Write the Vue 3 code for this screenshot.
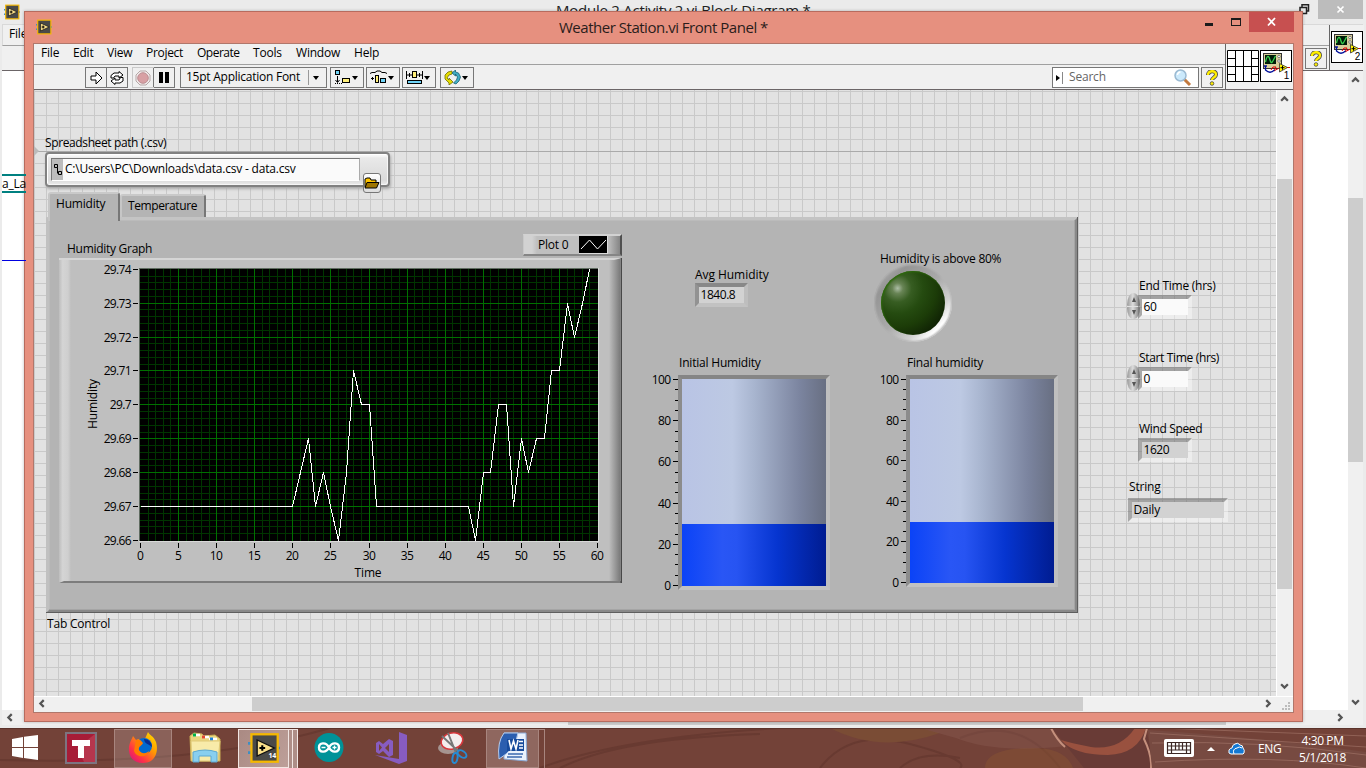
<script setup>
const readings = [
  [0, 67], [20, 67], [21, 68], [22, 69], [23, 67], [24, 68], [25, 67], [26, 66], [27, 68],
  [28, 71], [29, 70], [30, 70], [31, 67], [43, 67], [44, 66], [45, 68], [46, 68], [47, 70],
  [48, 70], [49, 67], [50, 69], [51, 68], [52, 69], [53, 69], [54, 71], [55, 71], [56, 73],
  [57, 72], [58, 73], [59, 74]
]
const gx = t => Math.floor(81.5 + t * 7.617) + 0.5
const gy = v => Math.floor(11.3 + (74 - v) * 33.9) + 0.5
const trace = readings.map(([t, v]) => `${gx(t)},${gy(v)}`).join(' ')
const minorX = Array.from({ length: 60 }, (_, i) => i + 1).filter(i => i % 5)
const majorX = Array.from({ length: 13 }, (_, i) => i * 5)
const minorY = Array.from({ length: 40 }, (_, i) => i).filter(i => i % 5).map(i => 66 + i / 5)
const majorY = [66, 67, 68, 69, 70, 71, 72, 73, 74]
const yLabel = v => (v === 70 ? '29.7' : `29.${v}`)
const menus = ['File', 'Edit', 'View', 'Project', 'Operate', 'Tools', 'Window', 'Help']
const tanks = [
  { key: 'initial', title: 'Initial Humidity', h: 206 },
  { key: 'final', title: 'Final humidity', h: 203 }
]
const steps = Array.from({ length: 21 }, (_, i) => i * 5)
const ty = (h, s) => Math.round(5 + h - (h * s) / 100) + 0.5
</script>

<template>
  <div class="desktop">
    <svg width="0" height="0" class="defs">
      <symbol id="vi" viewBox="0 0 28 28">
        <path d="M0 10h5M0 18h5M24 14h4" stroke="#3d8ec4" stroke-width="2.4" />
        <rect x="3" y="2" width="23" height="24" fill="#4a4a48" stroke="#f5b800" stroke-width="2" />
        <path d="M8 7l15 7-15 7z" fill="#fbe08a" stroke="#111" stroke-width="1.2" />
        <path d="M10 14h5M12.500 11.500v5" stroke="#000" stroke-width="1.800" />
      </symbol>
      <symbol id="scope" viewBox="0 0 32 32">
        <rect x=".5" y=".5" width="31" height="31" fill="#fff" stroke="#000" />
        <rect x="3.500" y="3.500" width="18" height="15" fill="#d8cf9a" stroke="#333" />
        <rect x="5" y="5" width="11" height="9" fill="#001c08" />
        <path d="M5.500 12c1.500-7 3-7 4.500-2s2.500 2 5.500-4" fill="none" stroke="#35d04c" stroke-width="1.300" />
        <circle cx="19" cy="6.500" r="1.300" fill="#fff" stroke="#555" stroke-width=".7" />
        <circle cx="19" cy="11" r="1.300" fill="#fff" stroke="#555" stroke-width=".7" />
        <path d="M11 20l2-3h3l-2 4 6-3.500h10" fill="none" stroke="#e00000" />
        <path d="M4 16h3M5.500 16v4c3 3 6 3 9 0" fill="none" stroke="#00109a" stroke-width="1.300" />
        <path d="M19.500 13.500l8 4-8 4.500z" fill="#fff200" stroke="#333" stroke-width=".8" />
        <path d="M20.500 17.700h4M22.500 15.700v4" stroke="#000" />
      </symbol>
      <symbol id="help" viewBox="0 0 12 16">
        <path d="M2 5c0-5 8-5 8-.5 0 3-4 3-4 5.500" fill="none" stroke="#444" stroke-width="4" />
        <path d="M2 5c0-5 8-5 8-.5 0 3-4 3-4 5.500" fill="none" stroke="#ffee00" stroke-width="2.400" />
        <circle cx="6" cy="13.500" r="1.800" fill="#ffee00" stroke="#444" stroke-width=".8" />
      </symbol>
      <symbol id="chev" viewBox="0 0 8 8">
        <path d="M1 6l3-3 3 3" fill="none" stroke="#555" stroke-width="2" />
      </symbol>
    </svg>

    <section class="back">
      <header class="back-title">
        <svg class="back-vi"><use href="#vi" /></svg>
        <span class="back-name">Module 2 Activity 2.vi Block Diagram *</span>
        <svg class="restore" width="12" height="12"><path d="M1 3.500h6.500v6H1zM3 3V.8h6.500V7H8" fill="none" stroke="#222" stroke-width="1.500" /></svg>
        <div class="back-close"><svg width="10" height="10"><path d="M1.500 1.500l6 6m0-6l-6 6" stroke="#fff" stroke-width="1.700" /></svg></div>
      </header>
      <div class="back-menu">File</div>
      <div class="back-tools"></div>
      <div class="back-icons">
        <div class="help-btn"><svg width="12" height="16"><use href="#help" /></svg></div>
        <div class="pane"><svg width="32" height="32"><use href="#scope" /></svg><b>2</b></div>
      </div>
      <div class="node">a_La</div>
      <div class="wire"></div>
      <div class="back-v"><svg class="up"><use href="#chev" /></svg><i></i><svg class="down"><use href="#chev" /></svg></div>
      <div class="back-h"><svg class="left"><use href="#chev" /></svg><i></i><svg class="right"><use href="#chev" /></svg></div>
    </section>

    <section class="window">
      <header class="titlebar">
        <svg class="win-vi"><use href="#vi" /></svg>
        <span class="caption">Weather Station.vi Front Panel *</span>
        <div class="controls">
          <i class="min"></i><i class="max"></i>
          <div class="close"><svg width="10" height="10"><path d="M1 1l7 7.500M8 1L1 8.500" stroke="#fff" stroke-width="1.800" /></svg></div>
        </div>
      </header>
      <div class="client">
        <div class="bars">
          <div class="bar-left">
            <nav class="menu"><span v-for="m in menus" :key="m" :class="'m-' + m.toLowerCase()">{{ m }}</span></nav>
            <div class="toolbar">
              <div class="btns run">
                <div><svg width="13" height="14"><path d="M1 5h5V1l6 6-6 6V9H1z" fill="#fff" stroke="#000" /></svg></div>
                <div><svg width="16" height="14"><path d="M2 7V4.500l3-2.500h5V.5L14 4l-4 3V5H6L4.500 7zM14 6.500V10l-3 2H6v1.500L2 10l4-3v2h4l1.500-2.500z" fill="#fff" stroke="#000" /></svg></div>
              </div>
              <div class="btns stop">
                <div class="off"><svg width="16" height="16"><path d="M5 1h6l4 4v6l-4 4H5l-4-4V5z" fill="#f3eeee" stroke="#b5a6a6" /><circle cx="8" cy="8" r="5.300" fill="#d8a0a4" stroke="#bc8e92" /></svg></div>
                <div><svg width="10" height="11"><path d="M0 0h4v11H0zM6 0h4v11H6z" /></svg></div>
              </div>
              <div class="font"><span>15pt Application Font</span><u></u><i class="tri"></i></div>
              <div class="drop a"><svg width="18" height="15"><rect x="1.500" y=".5" width="4" height="4" fill="#6fd3f7" stroke="#000" /><path d="M3.500 6v6M1.500 10l2 2.500 2-2.500" stroke="#000" fill="none" /><path d="M1 13.500h7" stroke="#000" stroke-dasharray="1 1" /><rect x="8.500" y="8.500" width="7" height="4" fill="#ffef7a" stroke="#000" /></svg><i class="tri"></i></div>
              <div class="drop b"><svg width="18" height="15"><path d="M0 3.500l2-1h3l2-1.500h3l2 1.500h3l2 1" stroke="#000" fill="none" /><path d="M1 8.500h3M2.500 7v3" stroke="#000" /><rect x="5.500" y="5.500" width="3" height="7" fill="#ffef7a" stroke="#000" /><rect x="10.500" y="8.500" width="5" height="4" fill="#6fd3f7" stroke="#000" /></svg><i class="tri"></i></div>
              <div class="drop c"><svg width="18" height="15"><path d="M.5 1v8M16.500 1v8M1 5h5M11 5h5M3.500 3v4M13.500 3v4" stroke="#000" /><rect x="6.500" y="1.500" width="4" height="6" fill="#ffef7a" stroke="#000" /><rect x="1.500" y="10.500" width="14" height="3" fill="#6fd3f7" stroke="#000" /></svg><i class="tri"></i></div>
              <div class="drop d"><svg width="18" height="15"><path d="M8 1L4 2 1 5v4l4 4v2l4-3-4-4v2L3 8l2-3 3-1z" fill="#e4dc00" stroke="#706c00" stroke-width=".8" /><path d="M12 14l3-3 1.500-4-2-4-3-1V0L8 3l3.500 3V4l2 3-1 3-3 3z" fill="#42adc3" stroke="#176073" stroke-width=".8" /></svg><i class="tri"></i></div>
              <div class="search"><i></i><u></u><span>Search</span><svg width="19" height="18"><path d="M11 10l6 6" stroke="#c37a3f" stroke-width="3" /><circle cx="7.500" cy="6.500" r="5.500" fill="#cbe9fb" stroke="#9bbad2" stroke-width="1.500" /><path d="M4.500 6a3 3 0 013-3" stroke="#fff" stroke-width="1.500" fill="none" /></svg></div>
              <div class="help-btn"><svg width="12" height="16"><use href="#help" /></svg></div>
            </div>
          </div>
          <div class="panes">
            <svg width="32" height="32"><path fill="#fff" stroke="#000" d="M.5.5h31v31H.5zM8.500 0v32M16.500 0v32M24.500 0v32M0 16.500h32M0 8.500h8M24 8.500h8M0 24.500h8M24 24.500h8" /></svg>
            <div class="pane"><svg width="32" height="32"><use href="#scope" /></svg><b>1</b></div>
          </div>
        </div>

        <div class="body">
          <main class="panel">
            <div class="origin"></div>
            <label class="lbl l-path">Spreadsheet path (.csv)</label>
            <div class="path">
              <div class="path-in"><em><svg width="9" height="13"><path d="M1.500 1.500h3v3h-3zM4.500 4.500v6M5.500 8.500h3v3h-3z" fill="none" stroke="#000" /></svg></em><span>C:\Users\PC\Downloads\data.csv - data.csv</span></div>
            </div>
            <div class="browse"><svg width="16" height="12"><path d="M1 10V2l2-1h3l1 2h5v3" fill="#ffc400" stroke="#000" /><path d="M1 11l2-5.500h12L12.500 11z" fill="#9d7400" stroke="#000" /></svg></div>

            <div class="tab t1">Humidity</div>
            <div class="tab t2">Temperature</div>
            <div class="page">
              <label class="lbl l-graph">Humidity Graph</label>
              <div class="legend"><span>Plot 0</span><svg width="29" height="18"><path d="M0 0h29v18H0z" /><path d="M2 13l8.500-9 8 9L27 4" fill="none" stroke="#fff" /></svg></div>
              <svg class="graph" width="563" height="325">
                <defs>
                  <linearGradient id="edgeL"><stop offset="0" stop-color="#bdbdbd" /><stop offset=".3" stop-color="#d4d4d4" /><stop offset=".75" stop-color="#cfcfcf" /><stop offset="1" stop-color="#bfbfbf" /></linearGradient>
                  <linearGradient id="edgeR"><stop offset="0" stop-color="#bfbfbf" /><stop offset="1" stop-color="#7b7b7b" /></linearGradient>
                </defs>
                <rect width="563" height="325" fill="#bfbfbf" />
                <rect width="12" height="325" fill="url(#edgeL)" />
                <rect x="550" width="11" height="325" fill="url(#edgeR)" />
                <path d="M0 0h563l-8 2H0z" fill="#d5d5d5" />
                <path d="M0 325h563v-2H5z" fill="#7c7c7c" />
                <rect x="561.500" width="1.500" height="325" fill="#484848" />
                <rect x="80" y="10" width="460" height="274" fill="#d9d9d9" />
                <rect x="80" y="10" width="459" height="273" fill="#5f6b60" />
                <rect x="81" y="11" width="458" height="272" />
                <g stroke="#003500" shape-rendering="crispEdges">
                  <path v-for="t in minorX" :key="'a' + t" :d="`M${gx(t)} 11V283`" />
                  <path v-for="v in minorY" :key="'b' + v" :d="`M81 ${gy(v)}H539`" />
                </g>
                <g stroke="#007000" shape-rendering="crispEdges">
                  <path v-for="t in majorX.slice(1, 12)" :key="'c' + t" :d="`M${gx(t)} 11V283`" />
                  <path v-for="v in majorY.slice(1, 8)" :key="'d' + v" :d="`M81 ${gy(v)}H539`" />
                </g>
                <polyline :points="trace" fill="none" stroke="#fff" shape-rendering="crispEdges" />
                <g stroke="#000" shape-rendering="crispEdges">
                  <path v-for="t in majorX" :key="'e' + t" :d="`M${gx(t)} 285v5`" />
                  <path v-for="v in majorY" :key="'f' + v" :d="`M74 ${gy(v)}h5`" />
                </g>
                <text v-for="t in majorX" :key="'g' + t" :x="gx(t) - 0.5" y="301.500" text-anchor="middle">{{ t }}</text>
                <text v-for="v in majorY" :key="'h' + v" x="72" :y="gy(v) + 4.500" text-anchor="end">{{ yLabel(v) }}</text>
                <text class="name" x="309" y="319" text-anchor="middle">Time</text>
                <text class="name" transform="translate(38 146) rotate(-90)" text-anchor="middle">Humidity</text>
              </svg>

              <label class="lbl l-avg">Avg Humidity</label>
              <div class="num avg">1840.8</div>
              <label class="lbl l-led">Humidity is above 80%</label>
              <div class="led"><i></i></div>

              <div v-for="k in tanks" :key="k.key" class="tank" :class="k.key">
                <label>{{ k.title }}</label>
                <div class="tank-row">
                  <svg width="30" :height="k.h + 16">
                    <template v-for="s in steps" :key="s">
                      <path :d="`M${s % 20 ? 25 : 23} ${ty(k.h, s)}H28`" stroke="#000" shape-rendering="crispEdges" />
                      <text v-if="s % 20 === 0" x="20.500" :y="ty(k.h, s) + 4.500" text-anchor="end">{{ s }}</text>
                    </template>
                  </svg>
                  <div class="glass"><div class="fluid"></div></div>
                </div>
              </div>
            </div>
            <label class="lbl l-tab">Tab Control</label>

            <label class="lbl l-end">End Time (hrs)</label>
            <div class="spin s-end"><b></b><b></b></div>
            <div class="num n-end white">60</div>
            <label class="lbl l-start">Start Time (hrs)</label>
            <div class="spin s-start"><b></b><b></b></div>
            <div class="num n-start white">0</div>
            <label class="lbl l-wind">Wind Speed</label>
            <div class="num n-wind">1620</div>
            <label class="lbl l-str">String</label>
            <div class="num n-str">Daily</div>
          </main>
          <div class="vbar"><svg><use href="#chev" /></svg><i></i><svg class="down"><use href="#chev" /></svg></div>
        </div>
        <div class="hbar"><svg class="left"><use href="#chev" /></svg><i></i><svg class="right"><use href="#chev" /></svg>
          <svg class="grip" width="9" height="9"><path d="M6 0h2v2H6zM3 3h2v2H3zM6 3h2v2H6zM0 6h2v2H0zM3 6h2v2H3zM6 6h2v2H6z" fill="#bcbcbc" /></svg>
        </div>
      </div>
    </section>

    <footer class="taskbar">
      <svg class="wall" width="1366" height="40">
        <rect width="1366" height="40" fill="#734238" />
        <g fill="none" stroke="#5d3129" stroke-opacity=".5"><path d="M0 32Q200 38 330 0M540 40Q620 10 780 0M820 40q30-40 90-24t50 24M960 10q60-24 100 30M560 40q60-30 200-34M900 40q20-18 60-10" stroke-width="2" /></g>
        <path d="M830 0q50 26 110 5l-20-5z" fill="#7a4c35" /><path d="M985 40q0-18 40-20t48 20z" fill="#845034" opacity=".6" />
        <path d="M920 0h130l16 18q-70 8-110-8z" fill="#88594f" opacity=".45" />
        <path d="M1052 0h94q2 12 6 24l-2 16h-66z" fill="#693b36" />
        <path d="M1146 0q-8 26-38 27-34 0-47-15 9 3 30 7 28 4 44-19z" fill="#99513f" />
        <path d="M1051 0q6 12 14 19M1147 0l-3 11q8 16 7 29" fill="none" stroke="#c5907d" stroke-width="2" />
        <path d="M1148 2q100 6 218 22v16h-214z" fill="#774a41" />
        <path d="M1150 5l216 14M1152 15q110-3 214 12M1155 34q120-8 211 6M1160 0l206 8" fill="none" stroke="#aa7c70" stroke-opacity=".55" />
        <rect width="1366" height="1" fill="#5b332b" />
      </svg>
      <div class="apps">
        <div class="app start"><svg width="26" height="25"><path d="M0 4l11-2v10H0zM12 1.800L26 0v12H12zM0 13h11v10L0 21zM12 13h14v12l-14-2z" fill="#fff" /></svg></div>
        <div class="app tt"><svg width="32" height="32"><rect x="1" y="1" width="30" height="30" fill="#a71c37" stroke="#7d7480" stroke-width="2" /><path d="M30 2v28H19L12 16z" fill="#c0485b" opacity=".6" /><path d="M7 8h18v6h-6v12h-6V14H7z" fill="#fff" /></svg></div>
        <div class="app fox"><svg width="31" height="32"><defs><linearGradient id="fx" x1="1" y1="0" x2=".1" y2="1"><stop offset="0" stop-color="#ffe900" /><stop offset=".4" stop-color="#ff9b00" /><stop offset=".75" stop-color="#ff3148" /><stop offset="1" stop-color="#d4147f" /></linearGradient></defs><path d="M20 0c2 4 5 3 8 10 3 10-1 21-13 21C5 31 0 24 1 15 2 9 4 7 5 4l3 4c4-2 5-1 8 1z" fill="url(#fx)" /><circle cx="16" cy="14" r="8" fill="#0069d0" /><path d="M8 8c4-1 5 0 7 3-1 3-5 3-4 7 3 5 8 3 10 1-1 6-12 8-15 0z" fill="#ff7a00" /><path d="M16 7c5 0 8 4 8 8-4-4-7-2-8-8" fill="#092d91" /></svg></div>
        <div class="app files"><svg width="34" height="31"><path d="M2 4l4-3 8 1 2 2 11-1 5 4v22H3z" fill="#ead67e" stroke="#c9ae54" /><path d="M5 3h7M14 5h7M21 7h8" stroke="#fff" stroke-width="2.500" /><path d="M5 3h3" stroke="#00b24b" stroke-width="3" /><path d="M14 5h3" stroke="#e24a31" stroke-width="3" /><path d="M22 7h3" stroke="#1d82d8" stroke-width="3" /><path d="M3 9h29l-2 20H4z" fill="#f8eba9" stroke="#e0c977" /><path d="M5 30V20q12-4 24 0v10h-6v-6H11v6z" fill="#89cfef" stroke="#5ca8d1" /></svg></div>
        <div class="app lab"><svg width="32" height="32"><use href="#vi" /></svg><b>14</b></div>
        <div class="app ard"><svg width="30" height="31"><circle cx="15" cy="15.500" r="14.500" fill="#009298" /><path d="M15 15.500c-3-6-10-5-10 0s7 6 10 0c3-6 10-5 10 0s-7 6-10 0z" fill="none" stroke="#fff" stroke-width="2.400" /><path d="M7.500 15.500h4M18.500 15.500h4M20.500 13.500v4" stroke="#fff" stroke-width="1.300" /></svg></div>
        <div class="app vs"><svg width="33" height="34"><path d="M24 1l8 3v26l-8 3L0 24l24 4zM1 12l3-2 4 3 6-5 4 2v14l-4 2-6-6-4 3-3-2zM4 13v7l3-3.500zM14 13l-4 4 4 4z" fill="#875cc0" fill-rule="evenodd" /></svg></div>
        <div class="app snip"><svg width="30" height="34"><ellipse cx="10" cy="17" rx="10" ry="6" fill="#a59490" /><ellipse cx="14" cy="10" rx="11" ry="8" transform="rotate(-15 14 10)" fill="#f4eded" stroke="#d8373c" stroke-width="1.500" /><path d="M4 5l17 16M10 2l8 20" stroke="#777" stroke-width="2" /><ellipse cx="24" cy="23" rx="5" ry="3" transform="rotate(35 24 23)" fill="none" stroke="#278bd2" stroke-width="2" /><ellipse cx="17" cy="27" rx="2.500" ry="5" transform="rotate(10 17 27)" fill="none" stroke="#278bd2" stroke-width="2" /></svg></div>
        <div class="app word"><svg width="31" height="31"><path d="M7 1h22l1 28-23-2z" fill="#e9f1fc" stroke="#8aa9d5" /><path d="M7 1h14Q19 17 2 27 0 10 7 1z" fill="#2b5eaf" stroke="#b7cdec" /><path d="M10 7h17v12H10z" fill="#174b9c" /><path d="M12 8l2 9 2.500-8 2.500 8 2-9M22 9.500h4M22 13h4M22 16h4" fill="none" stroke="#fff" stroke-width="1.600" /><path d="M11 22h15M10 25h15" stroke="#3a68ae" stroke-width="1.500" /></svg></div>
      </div>
      <div class="tray">
        <svg class="kbd" width="30" height="18"><rect x=".5" y=".5" width="29" height="17" rx="1" fill="#fff" stroke="#fff" /><path d="M3.500 3.500h23v11h-23zM3 7h24M3 11h24M7.500 3v11M11.500 3v8M15 3v8M18.500 3v8M22.500 3v11" fill="none" stroke="#3b2724" stroke-width="1.200" /></svg>
        <svg class="caret" width="8" height="5"><path d="M0 5l4-4 4 4z" fill="#fff" /></svg>
        <svg class="cloud" width="17" height="13"><path d="M5 12H3Q0 12 1 8q1-2 3-2 0-3 3-4 3-2 5 1 3 0 3 3 2 2 1 5l-1 1z" fill="#1379d4" stroke="#fff" /><path d="M6 12q-2-5 3-6 2-2 5 0" fill="none" stroke="#fff" /></svg>
        <span class="eng">ENG</span>
        <div class="clock"><span>4:30 PM</span><span>5/1/2018</span></div>
      </div>
    </footer>
  </div>
</template>

<style>
html, body { margin: 0; overflow: hidden; }
</style>

<style scoped>
* { box-sizing: border-box; }
.desktop { position: relative; width: 1366px; height: 768px; overflow: hidden; background: #734238; font: 12px/16px "Open Sans", "Noto Sans", sans-serif; letter-spacing: -0.2px; color: #000; }
svg { display: block; flex: none; }
text { font-size: 12px; letter-spacing: -0.65px; }
text.name { letter-spacing: -0.15px; }
.defs { position: absolute; }

/* window behind */
.back { position: absolute; left: 0; top: 0; width: 1366px; height: 728px; background: #ebebeb; }
.back-title { position: relative; height: 24px; }
.back-vi { position: absolute; left: 4px; top: 4px; width: 16px; height: 16px; }
.back-name { position: absolute; left: 556px; top: 0; font-size: 15px; line-height: 20px; letter-spacing: -0.25px; color: #222; white-space: nowrap; }
.restore { position: absolute; left: 1299px; top: 4px; }
.back-close { position: absolute; left: 1318px; top: 0; width: 45px; height: 19px; background: #bcbcbc; display: flex; align-items: center; justify-content: center; }
.back-menu { margin-left: 2px; height: 22px; width: 1361px; background: #f0f0f0; border: solid #d9d9d9; border-width: 1px 0 0 1px; border-bottom: 1px solid #a0a0a0; padding: 1px 0 0 6px; }
.back-tools { margin-left: 2px; height: 25px; width: 1361px; background: #f0f0f0; border-bottom: 1px solid #6b6567; }
.back::after { content: ""; display: block; margin-left: 2px; width: 1346px; height: 639px; background: #fff; }
.back-icons { position: absolute; z-index: 1; left: 1304px; top: 25px; width: 59px; height: 46px; display: flex; border-bottom: 1px solid #6b6567; background: linear-gradient(#f0f0f0 20px, #a0a0a0 20px, #a0a0a0 21px, #f0f0f0 21px); }
.back-icons .help-btn { margin-top: 23px; width: 22px; height: 21px; margin-left: 1px; }
.back-icons .pane { margin-left: auto; margin-top: 6px; }
.back-icons::before { content: ""; position: absolute; left: 25px; top: 0; width: 34px; height: 45px; background: #f0f0f0; border-left: 1px solid #666; }
.node { position: absolute; z-index: 1; left: 2px; top: 174px; width: 24px; height: 19px; border: solid #008080; border-width: 2px 0; line-height: 15px; }
.wire { position: absolute; z-index: 1; left: 2px; top: 260px; width: 24px; height: 1px; background: #0000e0; }
.back-v { position: absolute; left: 1348px; top: 71px; width: 15px; height: 639px; background: #f0f0f0; }
.back-v i { position: absolute; top: 127px; left: 0; width: 15px; height: 264px; background: #cdcdcd; }
.back-h { position: absolute; left: 2px; top: 710px; width: 1361px; height: 15px; background: #f0f0f0; }
.back-h i { position: absolute; left: 566px; top: 0; width: 658px; height: 15px; background: #cdcdcd; }
.back-v svg, .back-h svg, .vbar svg, .hbar svg:not(.grip) { position: absolute; width: 9px; height: 9px; }
.back-v .up { left: 3px; top: 4px; }
.back-v .down { left: 3px; bottom: 3px; transform: rotate(180deg); }
.back-h .left { left: 3px; top: 3px; transform: rotate(-90deg); }
.back-h .right { right: 18px; top: 3px; transform: rotate(90deg); }

/* main window */
.window { position: absolute; left: 24px; top: 11px; width: 1279px; height: 711px; background: #e6907f; border: 1px solid #b76b5e; box-shadow: 0 0 3px rgba(0, 0, 0, .25); }
.titlebar { position: relative; height: 31px; }
.win-vi { position: absolute; left: 11px; top: 7px; width: 16px; height: 16px; }
.caption { position: absolute; left: 534px; top: 5px; font-size: 15px; line-height: 20px; letter-spacing: -0.48px; white-space: nowrap; color: #2a1d1b; }
.controls { position: absolute; right: 8px; top: 0; display: flex; height: 20px; }
.min { width: 8px; height: 3px; background: #1b1b1b; margin: 11px 18px 0 0; }
.max { width: 10px; height: 8px; border: 1px solid #1b1b1b; border-top-width: 2px; margin: 6px 8px 0 0; }
.close { width: 45px; background: #c75050; display: flex; align-items: center; justify-content: center; }
.client { margin-left: 8px; width: 1261px; height: 670px; border: 1px solid #b0776b; background: #f0f0f0; display: flex; flex-direction: column; }
.bars { display: flex; height: 46px; border-bottom: 1px solid #6b6567; }
.bar-left { flex: 1; }
.menu { height: 21px; border-bottom: 1px solid #a0a0a0; display: flex; padding: 1px 0 0 7px; }
.menu span { flex: none; }
.m-file { width: 32px; }
.m-edit { width: 34px; }
.m-view { width: 39px; }
.m-project { width: 51px; letter-spacing: -0.3px; }
.m-operate { width: 56px; letter-spacing: -0.5px; }
.m-tools { width: 43px; }
.m-window { width: 58px; }
.toolbar { display: flex; padding: 2px 0 0 51px; height: 24px; }
.btns { display: flex; border: 1px solid #777; height: 21px; }
.btns > div { width: 21px; display: flex; align-items: center; justify-content: center; }
.btns > div:first-child { width: 20px; }
.btns > div + div { border-left: 1px solid #777; }
.run { width: 43px; }
.stop { width: 43px; margin-left: 4px; }
.off { outline: 1px solid #c9c9c9; }
.font { margin-left: 5px; width: 147px; height: 21px; border: 1px solid #777; display: flex; align-items: center; padding-left: 5px; position: relative; letter-spacing: -0.25px; }
.font span { width: 122px; white-space: nowrap; margin-top: -2px; }
.font u { width: 1px; height: 15px; background: #999; }
.tri { border: 3.5px solid transparent; border-top: 4px solid #000; border-bottom: 0; margin-left: 4px; }
.drop { width: 34px; height: 21px; border: 1px solid #777; display: flex; align-items: center; padding-left: 3px; margin-left: 2px; }
.drop .tri { margin-left: 0; }
.drop.a { margin-left: 3px; }
.drop.d { margin-left: 4px; }
.search { margin-left: auto; width: 147px; height: 21px; border: 1px solid #777; background: #fff; display: flex; align-items: center; color: #666; }
.search i { border: 3px solid transparent; border-left: 4px solid #000; border-right: 0; margin-left: 3px; }
.search u { width: 1px; height: 12px; background: #888; margin: 0 6px 0 2px; }
.search span { flex: 1; letter-spacing: -0.2px; margin-top: -1px; }
.search svg { margin-right: 6px; }
.help-btn { width: 22px; height: 21px; border: 1px solid #777; display: flex; align-items: center; justify-content: center; background: #f0f0f0; }
.toolbar .help-btn { margin: 0 2px; }
.panes { width: 68px; border-left: 1px solid #666; padding: 6px 0 0 1px; display: flex; gap: 1px; }
.pane { position: relative; width: 32px; height: 32px; }
.pane b { position: absolute; right: 3px; bottom: -1px; font: 10px/14px "Liberation Sans", sans-serif; }
.body { display: flex; height: 606px; }
.panel { position: relative; width: 1242px; background: linear-gradient(90deg, #c9c9c9 1px, transparent 1px) 0 0 / 12px 12px, linear-gradient(#c9c9c9 1px, transparent 1px) 0 1px / 12px 12px, #e2e2e2; }
.vbar { position: relative; flex: 1; background: #f0f0f0; border-left: 1px solid #fff; }
.vbar i { position: absolute; left: 0; top: 89px; width: 15px; height: 410px; background: #cdcdcd; }
.vbar svg { left: 3px; top: 4px; }
.vbar .down { top: auto; bottom: 5px; transform: rotate(180deg); }
.hbar { position: relative; flex: 1; background: #f0f0f0; border-top: 1px solid #fff; }
.hbar i { position: absolute; left: 218px; top: 0; width: 831px; height: 14px; background: #cdcdcd; }
.hbar svg.left { left: 3px; top: 2px; transform: rotate(-90deg); }
.hbar svg.right { right: 20px; top: 2px; transform: rotate(90deg); }
.hbar .grip { position: absolute; right: 2px; top: 5px; }

/* front panel items */
.lbl { position: absolute; white-space: nowrap; }
.origin { position: absolute; left: 0; top: 61px; width: 1242px; height: 1px; background: #aaa; }
.origin::before { content: ""; position: absolute; top: -5px; border: 5px solid transparent; border-left-color: #bbb; border-right: 0; }
.l-path { left: 11px; top: 45px; letter-spacing: -0.38px; }
.path { position: absolute; left: 11px; top: 62px; width: 345px; height: 35px; border: 2px solid #818181; border-radius: 4px; background: linear-gradient(#f6f6f6 0 2px, #e9e9e9 4px, #dadada 26px, #ececec); box-shadow: 1px 2px 3px #aaa, inset 1px 1px #fff, inset -1px -1px #f6f6f6; padding: 4px; }
.path-in { width: 309px; height: 23px; border: 1px solid #777; border-right-color: #aaa; border-bottom-color: #fff; background: #fafafa; display: flex; align-items: center; }
.path-in em { width: 11px; height: 21px; background: #bcbcbc; display: flex; align-items: center; justify-content: center; }
.path-in span { padding-left: 2px; margin-top: -1px; white-space: nowrap; }
.browse { position: absolute; left: 329px; top: 83px; width: 18px; height: 20px; border: 1px solid #777; border-radius: 3px; background: linear-gradient(#fff, #ddd); display: flex; align-items: center; justify-content: center; }
.tab { position: absolute; background: #b4b4b4; border: solid; border-width: 2px 2px 0 2px; border-color: #c9c9c9 #777 #b4b4b4 #c6c6c6; border-radius: 3px 3px 0 0; z-index: 1; }
.t1 { left: 14px; top: 102px; width: 72px; height: 29px; padding: 2px 0 0 6px; }
.t2 { left: 86px; top: 104px; width: 86px; height: 23px; padding: 2px 0 0 6px; letter-spacing: -0.4px; }
.page { position: absolute; left: 12px; top: 127px; width: 1032px; height: 396px; background: #b4b4b4; border: solid; border-width: 3px; border-color: #c4c4c4 #888 #888 #c0c0c0; box-shadow: inset -1px -1px #a5a5a5, inset 1px 1px #bbb; }
.page::after { content: ""; position: absolute; inset: -3px; border: solid #5e5e5e; border-width: 0 1px 1px 0; pointer-events: none; }
.l-graph { left: 18px; top: 21px; letter-spacing: -0.28px; }
.legend { position: absolute; left: 474px; top: 14px; width: 99px; height: 22px; border: solid; border-width: 2px 2px 2px 1px; border-color: #d2d2d2 #505050 #858585 #c8c8c8; background: linear-gradient(90deg, #d2d2d2 8px, #bfbfbf 13px, #bfbfbf 84px, #858585); display: flex; align-items: center; padding-left: 14px; }
.legend span { width: 41px; white-space: nowrap; }
.legend svg { border: 1px solid #ddd; border-width: 0 1px 1px 0; }
.graph { position: absolute; left: 10px; top: 38px; }
.l-avg { left: 646px; top: 47px; letter-spacing: -0.05px; }
.avg { left: 646px; top: 63px; width: 53px; height: 24px; }
.num { position: absolute; border: 4px solid; border-color: rgba(110, 110, 110, .55) rgba(255, 255, 255, .4) rgba(255, 255, 255, .4) rgba(110, 110, 110, .5); background: #d2d2d2; background-clip: padding-box; line-height: 16px; padding-left: 1.5px; letter-spacing: -0.45px; }
.page .num { border-color: #888 #bebebe #c2c2c2 #929292; }
.num.n-str { letter-spacing: -0.2px; }
.num.white { background-color: #fafafa; }
.l-led { left: 831px; top: 31px; letter-spacing: -0.26px; }
.led { position: absolute; left: 825px; top: 44px; width: 78px; height: 78px; border-radius: 50%; background: linear-gradient(135deg, #a8a8a8 12%, #959595 22%, #aaa 50%, #d0d0d0 70%, #fff 82%, #d4d4d4 94%); box-shadow: inset 0 0 2px 1px #b4b4b4; padding: 7px; }
.led i { display: block; width: 64px; height: 64px; border-radius: 50%; background: radial-gradient(circle at 26% 27%, #adbea6 0, #688455 8%, #375d22 21%, #254b10 38%, #1c3c08 58%, #122705 76%, #061000 100%); box-shadow: inset 1px 1px 2px #2b6a08; }
.tank { position: absolute; top: 135px; }
.initial { left: 601px; }
.final { left: 829px; }
.tank label { display: block; padding-left: 29px; height: 16px; white-space: nowrap; }
.tank-row { display: flex; align-items: flex-start; }
.tank-row svg { margin-top: 3px; margin-right: -2px; overflow: visible; }
.glass { width: 152px; border: 4px solid; border-color: #858585 #bfbfbf #c2c2c2 #8c8c8c; margin-top: 4px; background: linear-gradient(90deg, #b9c4e5, #bdc9e3 35%, #a8b5cf 50%, #7b849f 82%, #686f82); display: flex; align-items: flex-end; }
.initial .glass { height: 215px; }
.final .glass { height: 212px; }
.fluid { width: 100%; height: 62px; background: linear-gradient(90deg, #0b43f7, #2956f5 28%, #2754f2 38%, #0635d0 66%, #001c91); }
.final .fluid { height: 61px; }
.l-tab { left: 13px; top: 526px; }
.l-end { left: 1105px; top: 188px; letter-spacing: -0.26px; }
.l-start { left: 1105px; top: 260px; letter-spacing: -0.34px; }
.l-wind { left: 1105px; top: 331px; letter-spacing: -0.35px; }
.l-str { left: 1095px; top: 389px; }
.n-end { left: 1104px; top: 205px; width: 54px; height: 24px; }
.n-start { left: 1104px; top: 277px; width: 54px; height: 24px; }
.n-wind { left: 1104px; top: 348px; width: 54px; height: 24px; }
.n-str { left: 1094px; top: 408px; width: 100px; height: 24px; }
.spin { position: absolute; left: 1093px; width: 13px; height: 26px; display: flex; flex-direction: column; gap: 1px; }
.s-end { top: 203px; }
.s-start { top: 275px; }
.spin b { flex: 1; background: linear-gradient(90deg, #999, #ddd 45%, #777); border-radius: 50% 50% 1px 1px / 100% 100% 1px 1px; display: flex; justify-content: center; align-items: center; }
.spin b::after { content: ""; border: 2.5px solid transparent; border-bottom: 5px solid #555; border-top: 0; }
.spin b + b { border-radius: 1px 1px 50% 50% / 1px 1px 100% 100%; }
.spin b + b::after { transform: rotate(180deg); }

/* taskbar */
.taskbar { position: absolute; left: 0; top: 728px; width: 1366px; height: 40px; display: flex; justify-content: space-between; }
.wall { position: absolute; }
.apps { position: relative; display: flex; }
.app { position: relative; height: 39px; display: flex; align-items: center; justify-content: center; flex: none; width: 58px; border: 1px solid transparent; margin-top: 1px; }
.app svg { margin-top: -2px; }
.start { width: 50px; }
.tt { width: 62px; }
.fox { width: 58px; margin-left: 2px; background: rgba(255, 255, 255, .17); border-color: #a8857e; }
.files { width: 66px; }
.lab { width: 51px; background: linear-gradient(120deg, #aa8a83, #bd9f99); border-color: #f2e6e3; }
.lab b { position: absolute; right: 12px; bottom: 7px; font: bold 7px/8px "Open Sans", sans-serif; color: #fff; }
.lab::after { content: ""; position: absolute; left: 50px; top: -1px; width: 8px; height: 39px; border: 1px solid #f2e6e3; border-left: 0; background: linear-gradient(90deg, #ae8e87 3px, #f2e6e3 3px, #f2e6e3 4px, #ae8e87 4px); }
.ard { width: 80px; }
.vs { width: 44px; }
.snip { width: 80px; }
.word { width: 53px; margin-left: -7px; background: rgba(255, 255, 255, .2); border-color: #a8857e; }
.word::after { content: ""; position: absolute; left: 52px; top: -1px; width: 5px; height: 39px; border: 1px solid #a8857e; border-left: 0; }
.tray { position: relative; color: #fff; width: 203px; display: flex; align-items: center; }
.kbd { margin-left: 1px; }
.caret { margin-left: 13px; }
.cloud { margin-left: 13px; }
.eng { margin-left: 13px; width: 25px; letter-spacing: -0.3px; margin-top: 1px; }
.clock { margin-left: 14px; width: 51px; display: flex; flex-direction: column; align-items: center; line-height: 17px; margin-top: 2px; letter-spacing: -0.4px; }
</style>
